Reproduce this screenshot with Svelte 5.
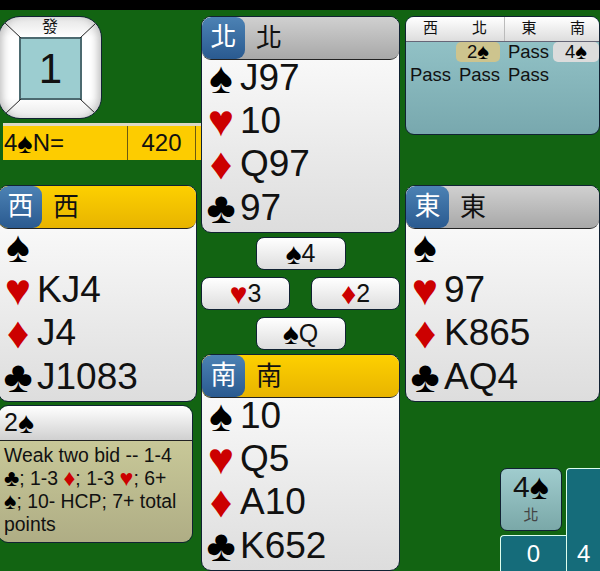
<script>
  const suits = { s: '♠', h: '♥', d: '♦', c: '♣' };
  const north = [['s', 'J97'], ['h', '10'], ['d', 'Q97'], ['c', '97']];
  const west = [['s', ''], ['h', 'KJ4'], ['d', 'J4'], ['c', 'J1083']];
  const east = [['s', ''], ['h', '97'], ['d', 'K865'], ['c', 'AQ4']];
  const south = [['s', '10'], ['h', 'Q5'], ['d', 'A10'], ['c', 'K652']];
  const isRed = (s) => s === 'h' || s === 'd';
</script>

{#snippet pip(s)}
  <span class="pip" class:red={isRed(s)}>{suits[s]}</span>
{/snippet}

{#snippet hand(wind, rows, active)}
  <div class="hand">
    <div class="hand-head" class:active>
      <span class="badge">{wind}</span>
      <span class="seat">{wind}</span>
    </div>
    {#each rows as [s, cards]}
      <div class="hand-row">
        <span class="suit">{@render pip(s)}</span>
        <span>{cards}</span>
      </div>
    {/each}
  </div>
{/snippet}

{#snippet card(s, rank, cls)}
  <div class="card {cls}">{@render pip(s)}{rank}</div>
{/snippet}

<div class="page">
  <div class="topbar"></div>
  <div class="table">
    <div class="col left">
      <div class="tile">
        <svg class="corners" viewBox="0 0 103 103" width="103" height="103">
          <path d="M6 6L22 21M97 6L81 21M6 97L22 82M97 97L81 82" stroke="#222" stroke-width="1" fill="none" />
        </svg>
        <div class="dealer">發</div>
        <div class="board">1</div>
      </div>
      <div class="score">
        <div class="score-cell contract">4{@render pip('s')}N=</div>
        <div class="score-cell points">420</div>
        <div class="score-cell"></div>
      </div>
      <div class="west">{@render hand('西', west, true)}</div>
      <div class="note">
        <div class="note-head">2{@render pip('s')}</div>
        <div class="note-body">
          Weak two bid -- 1-4 {@render pip('c')}; 1-3 {@render pip('d')}; 1-3 {@render pip('h')}; 6+ {@render pip('s')}; 10- HCP; 7+ total points
        </div>
      </div>
    </div>

    <div class="col center">
      {@render hand('北', north, false)}
      <div class="trick">
        {@render card('s', '4', 'top')}
        {@render card('h', '3', 'lft')}
        {@render card('d', '2', 'rgt')}
        {@render card('s', 'Q', 'bot')}
      </div>
      {@render hand('南', south, true)}
    </div>

    <div class="col right">
      <div class="auction">
        <div class="auction-head">
          <span>西</span><span>北</span><span class="split">東</span><span>南</span>
        </div>
        <div class="bids">
          <span></span>
          <span class="bid hl-y">2{@render pip('s')}</span>
          <span class="bid">Pass</span>
          <span class="bid hl-g">4{@render pip('s')}</span>
          <span class="bid">Pass</span>
          <span class="bid">Pass</span>
          <span class="bid">Pass</span>
        </div>
      </div>
      <div class="east">{@render hand('東', east, false)}</div>
      <div class="dash">
        <div class="final">
          <div class="final-bid">4{@render pip('s')}</div>
          <div class="final-by">北</div>
        </div>
        <div class="tricks ns">0</div>
        <div class="tricks ew">4</div>
      </div>
    </div>
  </div>
</div>

<style>
  :global(body) {
    margin: 0;
    background: #126412;
    overflow: hidden;
  }

  .page {
    width: 600px;
    height: 571px;
    overflow: hidden;
    font-family: 'Liberation Sans', 'Noto Sans CJK TC', sans-serif;
    color: #111;
    background: #126412;
  }

  .topbar {
    height: 10px;
    background: #000;
  }

  .table {
    display: grid;
    grid-template-columns: 199px 199px 196px;
    column-gap: 4px;
    margin-left: -2px;
    padding-top: 6px;
  }

  .col {
    display: flex;
    flex-direction: column;
    min-width: 0;
  }

  .right {
    margin-left: 1px;
  }

  .pip {
    font-size: 1.2em;
    line-height: 0;
    vertical-align: -0.06em;
    color: #000;
  }

  .pip.red {
    color: #cc0000;
  }

  .tile {
    position: relative;
    box-sizing: border-box;
    width: 104px;
    height: 103px;
    padding-top: 1px;
    border: 1px solid #123;
    border-radius: 22px;
    background: linear-gradient(#e4e4e4, #fff 20%, #fff 80%, #e8e8e8);
    box-shadow: inset 8px 0 8px -5px #bbb, inset -8px 0 8px -5px #bbb;
    text-align: center;
    overflow: hidden;
  }

  .corners {
    position: absolute;
    left: 0;
    top: 0;
  }

  .dealer {
    height: 19px;
    font-size: 16px;
    line-height: 18px;
  }

  .board {
    box-sizing: border-box;
    width: 63px;
    height: 63px;
    margin-left: 20px;
    border: 2px solid #4c6a70;
    background: #9ccdd0;
    font-size: 42px;
    line-height: 59px;
    text-align: center;
  }

  .score {
    display: grid;
    grid-template-columns: 125px 68px 10px;
    box-sizing: border-box;
    width: 203px;
    height: 37px;
    margin: 4px 0 25px 5px;
    border-top: 3px solid #ddd8c4;
    background: #fdcc00;
    font-size: 24px;
    line-height: 34px;
  }

  .score-cell {
    border-right: 1px solid #6b5a10;
  }

  .contract {
    padding-left: 1px;
  }

  .points {
    text-align: center;
  }

  .hand {
    box-sizing: border-box;
    height: 217px;
    border: 1px solid #123;
    border-radius: 10px;
    background: linear-gradient(#fff, #ddd);
    overflow: hidden;
  }

  .hand-head {
    display: flex;
    align-items: center;
    height: 42px;
    border-bottom: 1px solid #222;
    border-radius: 0 0 9px 9px;
    background: linear-gradient(#d0d0d0, #a8a8a8);
  }

  .hand-head.active {
    background: linear-gradient(#fdd000, #e8b400);
  }

  .badge {
    width: 43px;
    height: 42px;
    border-radius: 9px;
    background: linear-gradient(#4c82b4, #2a5a90);
    color: #fff;
    font-size: 26px;
    line-height: 40px;
    text-align: center;
  }

  .seat {
    margin-left: 11px;
    font-size: 26px;
    line-height: 36px;
  }

  .hand-row {
    display: flex;
    align-items: center;
    height: 43.4px;
    font-size: 37px;
  }

  .hand-head + .hand-row {
    margin-top: -4px;
  }

  .suit {
    width: 38px;
    text-align: center;
  }

  .west {
    height: 220px;
  }

  .note {
    box-sizing: border-box;
    width: 195px;
    height: 138px;
    border: 1px solid #123;
    border-radius: 10px;
    overflow: hidden;
  }

  .note-head {
    height: 34px;
    padding-left: 5px;
    border-bottom: 1px solid #222;
    background: linear-gradient(#fff, #d0d0d0);
    font-size: 25px;
    line-height: 33px;
  }

  .note-body {
    height: 102px;
    padding: 3px 7px 0 5px;
    background: linear-gradient(#c8c898, #aeac84);
    font-size: 19.4px;
    line-height: 23px;
  }

  .trick {
    display: grid;
    grid-template-columns: 89px 21px 89px;
    grid-template-rows: 33px 33px 33px;
    row-gap: 7px;
    padding: 4px 0;
  }

  .card {
    box-sizing: border-box;
    border: 1px solid #123;
    border-radius: 8px;
    background: linear-gradient(#fff, #ddd);
    font-size: 25px;
    line-height: 31px;
    text-align: center;
  }

  .card.top {
    grid-column: 1 / 4;
    grid-row: 1;
    justify-self: center;
    width: 90px;
  }

  .card.lft {
    grid-column: 1;
    grid-row: 2;
  }

  .card.rgt {
    grid-column: 3;
    grid-row: 2;
  }

  .card.bot {
    grid-column: 1 / 4;
    grid-row: 3;
    justify-self: center;
    width: 90px;
  }

  .auction {
    box-sizing: border-box;
    height: 119px;
    border: 1px solid #123;
    border-radius: 9px;
    background: linear-gradient(#98c8cc, #78a8ae);
    overflow: hidden;
  }

  .auction-head {
    display: grid;
    grid-template-columns: repeat(4, 49px);
    height: 24px;
    border-bottom: 1px solid #667;
    background: linear-gradient(#fff, #ddd);
    font-size: 15px;
    line-height: 22px;
    text-align: center;
  }

  .split {
    border-left: 1px solid #bbb;
  }

  .bids {
    display: grid;
    grid-template-columns: repeat(4, 49px);
    grid-auto-rows: 23px;
    font-size: 18.5px;
    line-height: 19px;
    text-align: center;
  }

  .bid.hl-y,
  .bid.hl-g {
    height: 20px;
    border-radius: 5px;
  }

  .hl-y {
    margin: 0 4px 0 1px;
    background: #cdc48e;
  }

  .hl-g {
    margin: 0 3px 0 0;
    background: #dcdcdc;
  }

  .east {
    margin-top: 50px;
  }

  .dash {
    display: grid;
    grid-template-columns: 66px 40px;
    grid-template-rows: 63px 37px;
    row-gap: 4px;
    margin: 66px 0 0 95px;
  }

  .final {
    box-sizing: border-box;
    width: 62px;
    border: 1px solid #123;
    border-radius: 7px;
    background: linear-gradient(#a0ccce, #7aa8a8);
    text-align: center;
  }

  .final-bid {
    font-size: 30px;
    line-height: 36px;
  }

  .final-by {
    font-size: 15px;
    line-height: 20px;
    color: #444;
  }

  .tricks {
    box-sizing: border-box;
    border: 1px solid #dfe;
    border-bottom: 0;
    border-right: 0;
    border-radius: 4px 0 0 0;
    background: #156c7a;
    color: #fff;
    font-size: 24px;
    line-height: 36px;
    text-align: center;
  }

  .tricks.ew {
    grid-column: 2;
    grid-row: 1 / 3;
    align-self: end;
    height: 104px;
    padding-top: 67px;
    text-align: left;
    padding-left: 10px;
  }
</style>
